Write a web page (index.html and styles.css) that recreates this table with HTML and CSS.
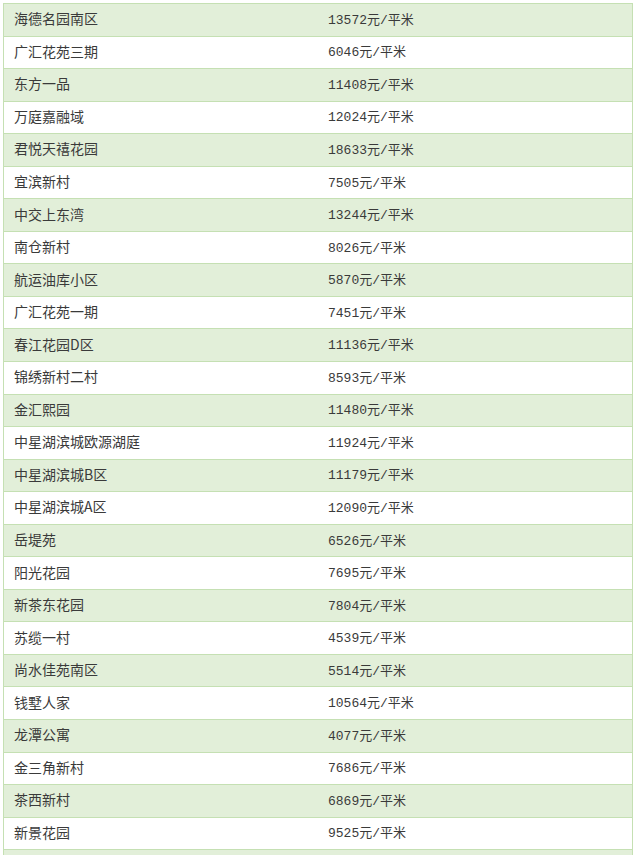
FILE: index.html
```html
<!DOCTYPE html>
<html lang="zh-CN">
<head>
<meta charset="utf-8">
<title>小区均价</title>
<link rel="stylesheet" href="styles.css">
</head>
<body>
<div class="table">
  <div class="row"><span class="name">海德名园南区</span><span class="price">13572元/平米</span></div>
  <div class="row"><span class="name">广汇花苑三期</span><span class="price">6046元/平米</span></div>
  <div class="row"><span class="name">东方一品</span><span class="price">11408元/平米</span></div>
  <div class="row"><span class="name">万庭嘉融域</span><span class="price">12024元/平米</span></div>
  <div class="row"><span class="name">君悦天禧花园</span><span class="price">18633元/平米</span></div>
  <div class="row"><span class="name">宜滨新村</span><span class="price">7505元/平米</span></div>
  <div class="row"><span class="name">中交上东湾</span><span class="price">13244元/平米</span></div>
  <div class="row"><span class="name">南仓新村</span><span class="price">8026元/平米</span></div>
  <div class="row"><span class="name">航运油库小区</span><span class="price">5870元/平米</span></div>
  <div class="row"><span class="name">广汇花苑一期</span><span class="price">7451元/平米</span></div>
  <div class="row"><span class="name">春江花园D区</span><span class="price">11136元/平米</span></div>
  <div class="row"><span class="name">锦绣新村二村</span><span class="price">8593元/平米</span></div>
  <div class="row"><span class="name">金汇熙园</span><span class="price">11480元/平米</span></div>
  <div class="row"><span class="name">中星湖滨城欧源湖庭</span><span class="price">11924元/平米</span></div>
  <div class="row"><span class="name">中星湖滨城B区</span><span class="price">11179元/平米</span></div>
  <div class="row"><span class="name">中星湖滨城A区</span><span class="price">12090元/平米</span></div>
  <div class="row"><span class="name">岳堤苑</span><span class="price">6526元/平米</span></div>
  <div class="row"><span class="name">阳光花园</span><span class="price">7695元/平米</span></div>
  <div class="row"><span class="name">新茶东花园</span><span class="price">7804元/平米</span></div>
  <div class="row"><span class="name">苏缆一村</span><span class="price">4539元/平米</span></div>
  <div class="row"><span class="name">尚水佳苑南区</span><span class="price">5514元/平米</span></div>
  <div class="row"><span class="name">钱墅人家</span><span class="price">10564元/平米</span></div>
  <div class="row"><span class="name">龙潭公寓</span><span class="price">4077元/平米</span></div>
  <div class="row"><span class="name">金三角新村</span><span class="price">7686元/平米</span></div>
  <div class="row"><span class="name">茶西新村</span><span class="price">6869元/平米</span></div>
  <div class="row"><span class="name">新景花园</span><span class="price">9525元/平米</span></div>
  <div class="row"><span class="name">&nbsp;</span><span class="price">&nbsp;</span></div>
</div>
</body>
</html>
```

FILE: styles.css
```css
html, body {
  margin: 0;
  padding: 0;
  background: #ffffff;
}

.table {
  margin: 3px 0 0 3px;
  width: 630px;
  box-sizing: border-box;
  border-top: 1px solid #c5e0b3;
  display: flex;
  flex-direction: column;
  font-family: "Liberation Mono", "Noto Sans CJK SC", monospace;
  font-size: 13px;
  color: #3a3a3a;
}

.row {
  display: grid;
  grid-template-columns: 1fr 1fr;
  align-items: center;
  height: 32.55px;
  padding-bottom: 3px;
  box-sizing: border-box;
  border-left: 1px solid #c5e0b3;
  border-right: 1px solid #c5e0b3;
  border-bottom: 1px solid #c5e0b3;
}

.row:nth-child(odd) {
  background: #e2efd9;
}

.name {
  padding-left: 10px;
  font-family: "Noto Sans CJK SC", sans-serif;
  font-size: 14px;
}

.price {
  padding-left: 10px;
}
```
